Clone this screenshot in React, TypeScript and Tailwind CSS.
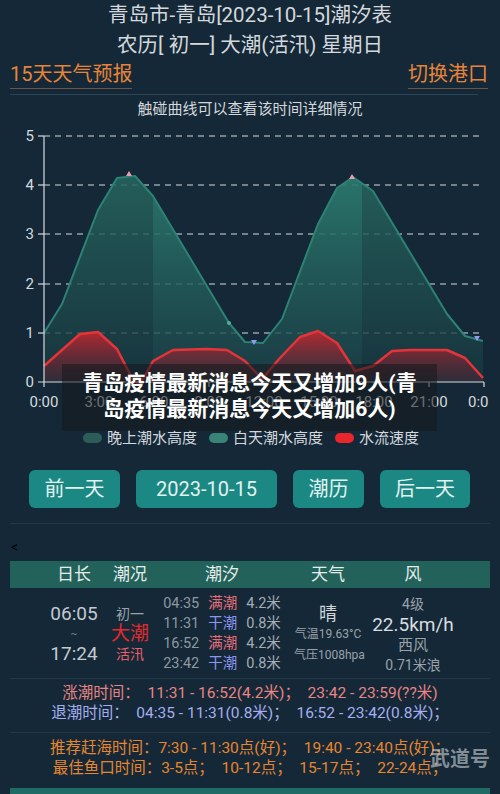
import React from 'react';

const FONT = "font-['Roboto','Noto_Sans_CJK_SC',sans-serif]";

const green: [number, number][] = [
  [44, 332], [62, 303], [98, 209], [117, 177], [135, 175], [153, 195], [229, 322], [245, 341],
  [263, 342], [282, 318], [318, 223], [337, 187], [353, 176], [373, 190], [447, 313], [465, 335], [483, 340],
];

const red: [number, number][] = [
  [44, 365], [80, 333], [98, 331], [117, 348], [132, 377], [140, 384], [153, 360], [173, 349], [207, 348],
  [227, 349], [245, 360], [262, 378], [280, 357], [300, 336], [318, 330], [337, 342], [355, 370], [373, 365],
  [392, 350], [410, 349], [447, 349], [465, 357], [483, 377],
];

const toPts = (p: [number, number][]) => p.map(([x, y]) => `${x},${y}`).join(' ');
const toArea = (p: [number, number][]) =>
  `M${p[0][0]},381 ` + p.map(([x, y]) => `L${x},${y}`).join(' ') + ` L${p[p.length - 1][0]},381 Z`;

const levels = [
  { v: '5', y: 135 },
  { v: '4', y: 184 },
  { v: '3', y: 233 },
  { v: '2', y: 283 },
  { v: '1', y: 332 },
];

const hours = ['0:00', '3:00', '6:00', '9:00', '12:00', '15:00', '18:00', '21:00'];

function TideChart() {
  return (
    <svg width="500" height="305" viewBox="0 120 500 305" className="block">
      <defs>
        <linearGradient id="day" x1="0" y1="170" x2="0" y2="381" gradientUnits="userSpaceOnUse">
          <stop offset="0" stopColor="#2c7d70" stopOpacity="0.92" />
          <stop offset="1" stopColor="#1b4248" stopOpacity="0.75" />
        </linearGradient>
        <linearGradient id="night" x1="0" y1="170" x2="0" y2="381" gradientUnits="userSpaceOnUse">
          <stop offset="0" stopColor="#276860" stopOpacity="0.85" />
          <stop offset="1" stopColor="#183840" stopOpacity="0.75" />
        </linearGradient>
        <linearGradient id="redfill" x1="0" y1="330" x2="0" y2="381" gradientUnits="userSpaceOnUse">
          <stop offset="0" stopColor="#c8262e" stopOpacity="0.9" />
          <stop offset="1" stopColor="#5a2030" stopOpacity="0.35" />
        </linearGradient>
        <clipPath id="dayclip">
          <rect x="153" y="120" width="209" height="262" />
        </clipPath>
        <clipPath id="nightclip">
          <rect x="44" y="120" width="109" height="262" />
          <rect x="362" y="120" width="122" height="262" />
        </clipPath>
      </defs>

      {levels.map((l) => (
        <g key={l.v}>
          <line x1="44" y1={l.y} x2="484" y2={l.y} stroke="#d5dbde" strokeWidth="1.2" strokeDasharray="6 5" />
          <line x1="38" y1={l.y} x2="44" y2={l.y} stroke="#d5dbde" strokeWidth="1.2" />
          <text x="34" y={l.y + 5} textAnchor="end" fontSize="15" fill="#d5dbde" fontFamily="Roboto, sans-serif">
            {l.v}
          </text>
        </g>
      ))}
      <text x="34" y="386" textAnchor="end" fontSize="15" fill="#d5dbde" fontFamily="Roboto, sans-serif">0</text>

      <path d={toArea(green)} fill="url(#night)" clipPath="url(#nightclip)" />
      <path d={toArea(green)} fill="url(#day)" clipPath="url(#dayclip)" />
      <polyline points={toPts(green)} fill="none" stroke="#2c8275" strokeWidth="2" strokeLinejoin="round" />

      <path d={toArea(red)} fill="url(#redfill)" />
      <polyline points={toPts(red)} fill="none" stroke="#e5333a" strokeWidth="2.5" strokeLinejoin="round" />

      <polygon points="129,170 126,175 132,175" fill="#e8a0a8" />
      <polygon points="352,173 349,178 355,178" fill="#e8a0a8" />
      <polygon points="251,339 257,339 254,344" fill="#8f9cf0" />
      <polygon points="474,335 480,335 477,340" fill="#8f9cf0" />
      <circle cx="229" cy="322" r="2" fill="#4fb0a0" />

      <line x1="44" y1="135" x2="44" y2="381" stroke="#d5dbde" strokeWidth="1.2" />
      <line x1="38" y1="381" x2="484" y2="381" stroke="#d5dbde" strokeWidth="1.2" />
      {hours.map((h, i) => (
        <g key={h}>
          <line x1={44 + i * 55} y1="381" x2={44 + i * 55} y2="386" stroke="#d5dbde" strokeWidth="1.2" />
          <text x={44 + i * 55} y="406" textAnchor="middle" fontSize="15" fill="#d5dbde" fontFamily="Roboto, sans-serif">
            {h}
          </text>
        </g>
      ))}
      <line x1="484" y1="381" x2="484" y2="386" stroke="#d5dbde" strokeWidth="1.2" />
      <text x="468" y="406" fontSize="15" fill="#d5dbde" fontFamily="Roboto, sans-serif">0:0</text>
    </svg>
  );
}

const tides = [
  { t: '04:35', s: '满潮', h: '4.2米', high: true },
  { t: '11:31', s: '干潮', h: '0.8米', high: false },
  { t: '16:52', s: '满潮', h: '4.2米', high: true },
  { t: '23:42', s: '干潮', h: '0.8米', high: false },
];

export default function App() {
  return (
    <div className={`relative w-[500px] h-[794px] overflow-hidden bg-[#142837] text-[#d4d8dc] ${FONT}`}>
      <div className="text-center text-[20.5px] leading-[30px]">
        <p>青岛市-青岛[2023-10-15]潮汐表</p>
        <p>农历[ 初一] 大潮(活汛) 星期日</p>
      </div>

      <div className="flex justify-between px-[10px] mr-[2px] text-[20px] leading-[28px] text-[#e8843a]">
        <span className="border-b border-[#6a5548]">15天天气预报</span>
        <span className="border-b border-[#6a5548]">切换港口</span>
      </div>
      <div className="mt-[5px] ml-[10px] mr-[22px] h-px bg-[#2c4556]" />
      <p className="mt-[4px] text-center text-[15px] leading-[20px] text-[#d4d8dc]">触碰曲线可以查看该时间详细情况</p>

      <div className="relative mt-[2px] h-[305px]">
        <TideChart />
        <div className="absolute left-[62px] top-[243px] w-[375px] h-[67px] bg-[rgba(22,24,28,0.55)] pt-[6px] text-center text-[21px] leading-[26px] font-bold text-white">
          青岛疫情最新消息今天又增加9人(青
          <br />
          岛疫情最新消息今天又增加6人)
        </div>
      </div>

      <div className="mt-[2px] flex items-center h-[20px] pl-[83px] text-[15px] text-[#d4d8dc]">
        <span className="w-[19px] h-[10px] rounded-full bg-[#2d5d58]" />
        <span className="ml-[5px]">晚上潮水高度</span>
        <span className="ml-[12px] w-[19px] h-[10px] rounded-full bg-[#3a8377]" />
        <span className="ml-[5px]">白天潮水高度</span>
        <span className="ml-[12px] w-[19px] h-[10px] rounded-full bg-[#e8262c]" />
        <span className="ml-[5px]">水流速度</span>
      </div>

      <div className="mt-[22px] flex gap-[16px] pl-[29px] text-[20px] text-[#e2f2f0]">
        {[
          { l: '前一天', w: 'w-[91px]' },
          { l: '2023-10-15', w: 'w-[141px]' },
          { l: '潮历', w: 'w-[71px]' },
          { l: '后一天', w: 'w-[90px]' },
        ].map((b) => (
          <div key={b.l} className={`${b.w} h-[38px] rounded-[6px] bg-[#1b8884] flex items-center justify-center`}>
            {b.l}
          </div>
        ))}
      </div>

      <div className="mt-[15px] mx-[10px] h-px bg-[#22394a]" />
      <div className="mt-[15px] h-[16px] pl-[11px] text-[14px] leading-[16px] text-black">&lt;</div>

      <div className="mt-[6px] mx-[10px]">
        <div className="grid grid-cols-[72px_40px_144px_68px_102px] pl-[28px] h-[27px] items-center bg-[#23625a] text-[17px] text-[#e4ecea] text-center">
          <span>日长</span>
          <span>潮况</span>
          <span>潮汐</span>
          <span>天气</span>
          <span>风</span>
        </div>

        <div className="grid grid-cols-[72px_40px_144px_68px_102px] pl-[28px] pt-[6px] h-[90px] text-center">
          <div className="h-[80px] flex flex-col justify-center leading-[20px] text-[#c4cad0]">
            <span className="text-[19px]">06:05</span>
            <span className="text-[10px] text-[#7d8891]">~</span>
            <span className="text-[19px]">17:24</span>
          </div>
          <div className="h-[80px] flex flex-col justify-center leading-[20px]">
            <span className="text-[14px] text-[#9aa3ab]">初一</span>
            <span className="text-[19px] text-[#e02a2e]">大潮</span>
            <span className="text-[14px] text-[#e8606a]">活汛</span>
          </div>
          <div className="h-[80px] grid grid-cols-[auto_auto_auto] justify-center content-center gap-x-[9px] leading-[20px] text-[14.5px]">
            {tides.map((r) => (
              <React.Fragment key={r.t}>
                <span className="text-[#8e98a1]">{r.t}</span>
                <span className={r.high ? 'text-[#e66d78]' : 'text-[#8c96f0]'}>{r.s}</span>
                <span className="text-[#a4acb4]">{r.h}</span>
              </React.Fragment>
            ))}
          </div>
          <div className="h-[80px] flex flex-col justify-center leading-[21px] text-[#9aa3ab] whitespace-nowrap">
            <span className="text-[18px] text-[#d4d8dc]">晴</span>
            <span className="text-[12px]">气温19.63°C</span>
            <span className="text-[12px]">气压1008hpa</span>
          </div>
          <div className="h-[80px] flex flex-col justify-center leading-[20px] text-[#9aa3ab] whitespace-nowrap">
            <span className="text-[14px]">4级</span>
            <span className="text-[19px] leading-[21px] text-[#d8dde0]">22.5km/h</span>
            <span className="text-[15px]">西风</span>
            <span className="text-[14px]">0.71米浪</span>
          </div>
        </div>
      </div>

      <div className="mx-[10px] h-px bg-[#22394a]" />
      <div className="pt-[4px] pb-[9px] text-center text-[15.5px] leading-[20px] whitespace-pre">
        <p className="text-[#e88484]">涨潮时间：  11:31 - 16:52(4.2米)；  23:42 - 23:59(??米)</p>
        <p className="text-[#a6aef0]">退潮时间：  04:35 - 11:31(0.8米)；  16:52 - 23:42(0.8米)；</p>
      </div>
      <div className="mx-[10px] h-px bg-[#22394a]" />
      <div className="pt-[6px] text-center text-[15.5px] leading-[19.5px] text-[#e8862f] whitespace-pre">
        <p>推荐赶海时间：7:30 - 11:30点(好)；  19:40 - 23:40点(好)；</p>
        <p>最佳鱼口时间：3-5点；  10-12点；  15-17点；  22-24点；</p>
      </div>
      <div className="absolute left-[10px] right-[10px] bottom-0 h-[6px] bg-[#1f6b66]" />
      <div className="absolute left-[430px] top-[744px] text-[20px] font-bold text-[rgba(205,212,218,0.6)]">武道号</div>
    </div>
  );
}
